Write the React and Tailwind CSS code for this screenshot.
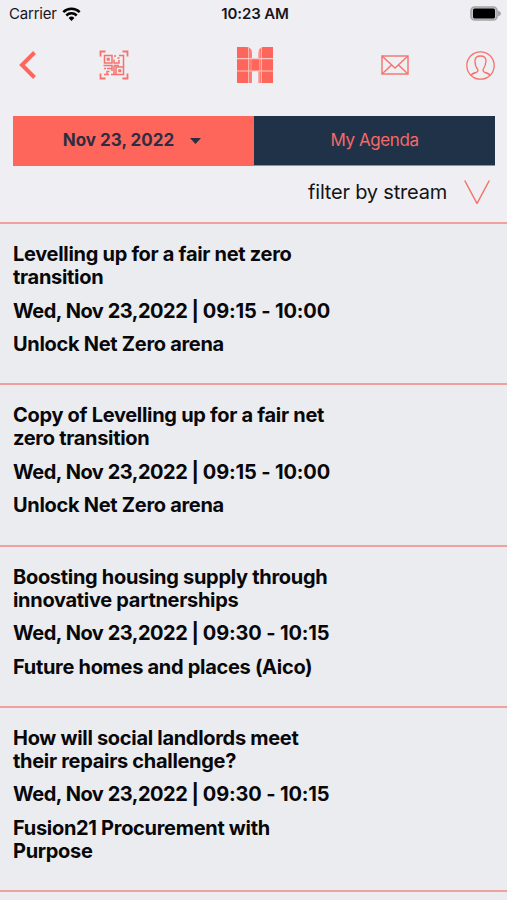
import React, { useState } from 'react';

const sessions = [
    { title: 'Levelling up for a fair net zero transition', date: 'Wed, Nov 23,2022', hours: '09:15 - 10:00', place: 'Unlock Net Zero arena' },
    { title: 'Copy of Levelling up for a fair net zero transition', date: 'Wed, Nov 23,2022', hours: '09:15 - 10:00', place: 'Unlock Net Zero arena' },
    { title: 'Boosting housing supply through innovative partnerships', date: 'Wed, Nov 23,2022', hours: '09:30 - 10:15', place: 'Future homes and places (Aico)' },
    { title: 'How will social landlords meet their repairs challenge?', date: 'Wed, Nov 23,2022', hours: '09:30 - 10:15', place: 'Fusion21 Procurement with Purpose' },
];

function StatusBar() {
    return (
        <div className="grid grid-cols-3 items-center h-[27px] pl-[9px] pr-[6px] text-[15px] text-[#17171b]">
            <div className="flex items-center gap-[5px]">
                <span className="tracking-[-0.2px] pt-[2px]">Carrier</span>
                <svg className="w-[19px] h-[14px]" viewBox="0 0 19 14" fill="none" stroke="#000" strokeWidth="2.5">
                    <path d="M1.3 5.2a11.7 11.7 0 0 1 16.4 0" />
                    <path d="M4.3 8.5a7.4 7.4 0 0 1 10.4 0" />
                    <path d="M9.5 14 6.6 11a4.2 4.2 0 0 1 5.8 0Z" fill="#000" stroke="none" />
                </svg>
            </div>
            <span className="pt-[2px] text-center font-semibold tracking-[-0.1px] whitespace-nowrap">10:23 AM</span>
            <svg className="justify-self-end w-[31px] h-[15px]" viewBox="0 0 31 15">
                <path d="M28 4.5q3 1 3 3t-3 3Z" fill="#a5a5a9" />
                <rect x="1" y="1" width="26" height="13" rx="3.6" fill="#c4c4c8" stroke="#a5a5a9" strokeWidth="1.6" />
                <rect x="3" y="2.6" width="22" height="9.8" rx="1.6" fill="#000" />
            </svg>
        </div>
    );
}

function QrIcon() {
    return (
        <svg className="w-[30px] h-[30px]" viewBox="0 0 30 30" fill="none" stroke="#f5736b" strokeWidth="1.5">
            <path d="M1.500 6.500v-5h5M23.500 1.500h5v5M28.500 23.500v5h-5M6.500 28.500h-5v-5" strokeWidth="1.800" />
            <path d="M5.500 5.500h7.500v7.500h-7.500zM17 17h7.500v7.500h-7.500zM8.500 8.500h1.500v1.500H8.500zM20 20h1.500v1.500h-1.500z" />
            <path d="M16 5v2M15 9.500v3.500h5v-3M18.500 8h2M20 5.500h4.500V17M4.500 15.500h8.500v3M15 15.500h5M8 18.500h5v2.500M15 15.500v9M5 18.500h2M10.500 21.500H8v3M5 24.500h5M12 24.500h5" />
        </svg>
    );
}

function LogoIcon() {
    return (
        <svg className="w-[38px] h-[38px]" viewBox="0 0 38 38">
            <path d="M1 1h10q5 1 5 6v5h6.500V7q0-5 4.500-6h10v36H22.500V25H16v12H1Z" fill="#ff665b" />
            <path d="M1 12.700h36M1 25h36" stroke="#fbc6c4" strokeWidth="1.200" />
            <path d="M12.700 1.500v35.500M25.300 1.500v35.500" stroke="#fbc6c4" strokeWidth="1" />
            <path d="M15 4v33M23.500 4v33" stroke="#fbb5b2" strokeWidth="0.600" />
        </svg>
    );
}

function Header() {
    return (
        <div className="flex items-center justify-between h-[76px] pl-[18px] pr-[12px]">
            <svg className="w-[20px] h-[28px]" viewBox="0 0 20 28" fill="none" stroke="#ff665b" strokeWidth="4">
                <path d="M16.500 1.500 4 14l12.500 12.500" />
            </svg>
            <div className="ml-[-18px]"><QrIcon /></div>
            <div className="ml-[28px]"><LogoIcon /></div>
            <svg className="ml-[28px] w-[28px] h-[20px]" viewBox="0 0 28 20" fill="none" stroke="#f5736b" strokeWidth="1.400">
                <rect x="1" y="1" width="26" height="18" />
                <path d="m1 1 13 12L27 1M1 19l9.500-9M27 19l-9.500-9" />
            </svg>
            <svg className="ml-[-22px] w-[29px] h-[29px]" viewBox="0 0 29 29" fill="none" stroke="#f5736b" strokeWidth="1.300">
                <circle cx="14.500" cy="14.500" r="13.700" />
                <path d="M5 24.500q1-2 5-3 2.500-.8 1.800-3C10 16.500 9 13.500 9 10q0-5 5.500-5T20 10q0 3.500-2.800 8.500-.7 2.200 1.800 3 4 1 5 3" />
            </svg>
        </div>
    );
}

function SessionRow({ session }) {
    return (
        <li className="border-b-2 border-[#f0a19e] pt-[19px] pb-[27.300px] pl-[13px] text-[20px] leading-[23px] font-[650] tracking-[-0.3px] text-[#08080a]">
            <div className="flex flex-col gap-[10.500px] w-[326px]">
                <h2>{ session.title }</h2>
                <p className="whitespace-nowrap">
                    <span className="tracking-[-0.48px]">{ session.date } | </span>
                    <span className="tracking-[-0.15px]">{ session.hours }</span>
                </p>
                <p>{ session.place }</p>
            </div>
        </li>
    );
}

export default function App() {
    const [date] = useState('Nov 23, 2022');

    return (
        <div className="flex flex-col w-full h-[900px] overflow-hidden bg-[#efeef3] font-['Inter',sans-serif]">
            <StatusBar />
            <Header />
            <div className="mt-[13px] ml-[13px] mr-[12px] flex h-[50px] shrink-0 bg-[#ff665b]">
                <button className="flex w-1/2 items-center justify-center gap-[16px] pr-[3px] text-[17px] font-[650] text-[#2e2d40]">
                    { date }
                    <svg className="w-[11px] h-[6px]" viewBox="0 0 11 6" fill="#2e2d40"><path d="M0 0h11L5.500 6Z" /></svg>
                </button>
                <button className="w-1/2 h-[49px] bg-[#203247] text-[17px] tracking-[-0.4px] text-[#f5696a]">My Agenda</button>
            </div>
            <div className="flex h-[56px] shrink-0 items-center justify-end gap-[17px] pb-[4px] pr-[17px] text-[20px] tracking-[-0.2px] text-[#141416]">
                <span>filter by stream</span>
                <svg className="w-[26px] h-[24px]" viewBox="0 0 26 24" fill="none" stroke="#f5736b" strokeWidth="1.500">
                    <path d="M.7.5 13 23.500 25.300.5" />
                </svg>
            </div>
            <ul className="grow border-t-2 border-[#f0a19e] bg-[#ebecf0]">
                { sessions.map((session, i) => <SessionRow key={ i } session={ session } />) }
            </ul>
        </div>
    );
}
